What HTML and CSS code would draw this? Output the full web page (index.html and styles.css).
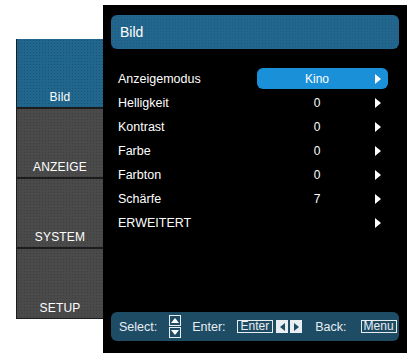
FILE: index.html
```html
<!DOCTYPE html>
<html lang="de">
<head>
    <meta charset="UTF-8">
    <meta name="viewport" content="width=device-width, initial-scale=1.0">
    <title>Bild</title>
    <link rel="stylesheet" href="styles.css">
</head>
<body>

    <div class="osd">
        <div class="tabs">
            <div class="tab active">Bild</div>
            <div class="tab">ANZEIGE</div>
            <div class="tab">SYSTEM</div>
            <div class="tab">SETUP</div>
        </div>

        <div class="panel">
            <div class="title">Bild</div>

            <ul class="rows">
                <li class="row selected"><span class="label">Anzeigemodus</span><span class="value">Kino</span><span class="arrow"></span></li>
                <li class="row"><span class="label">Helligkeit</span><span class="value">0</span><span class="arrow"></span></li>
                <li class="row"><span class="label">Kontrast</span><span class="value">0</span><span class="arrow"></span></li>
                <li class="row"><span class="label">Farbe</span><span class="value">0</span><span class="arrow"></span></li>
                <li class="row"><span class="label">Farbton</span><span class="value">0</span><span class="arrow"></span></li>
                <li class="row"><span class="label">Schärfe</span><span class="value">7</span><span class="arrow"></span></li>
                <li class="row"><span class="label">ERWEITERT</span><span class="value"></span><span class="arrow"></span></li>
            </ul>

            <div class="help">
                <span>Select:</span>
                <span class="updown">
                    <span class="key small"><span class="tri up"></span></span>
                    <span class="key small"><span class="tri down"></span></span>
                </span>
                <span class="gap">Enter:</span>
                <span class="key">Enter</span>
                <span class="key arrowkey"><span class="tri left"></span></span>
                <span class="key arrowkey"><span class="tri right"></span></span>
                <span class="gap back">Back:</span>
                <span class="key menu">Menu</span>
            </div>
        </div>
    </div>

</body>
</html>
```

FILE: styles.css
```css
body {
    margin: 0;
    background: #fff;
    font-family: "Liberation Sans", Arial, sans-serif;
    color: #fff;
}
.osd {
    display: flex;
    align-items: flex-start;
    padding: 5px 0 0 16px;
}
.tabs {
    width: 87px;
    margin-top: 34px;
    display: flex;
    flex-direction: column;
    background: #1c1c1c;
    border-left: 1px solid #1c1c1c;
    border-bottom: 1px solid #1c1c1c;
    box-sizing: border-box;
}
.tab {
    height: 68px;
    display: flex;
    align-items: flex-end;
    justify-content: center;
    padding-bottom: 3px;
    box-sizing: border-box;
    font-size: 12px;
    letter-spacing: 0.2px;
    background-color: #4a4a4a;
    background-image: radial-gradient(rgba(0,0,0,0.18) 0.6px, transparent 0.7px);
    background-size: 3px 3px;
    margin-bottom: 2px;
}
.tab:last-child {
    margin-bottom: 0;
    height: 69px;
}
.tab.active {
    background-color: #21668d;
}
.panel {
    width: 304px;
    height: 348px;
    box-sizing: border-box;
    background: #000;
    padding: 10px 8px 12px 8px;
    display: flex;
    flex-direction: column;
}
.title {
    height: 34px;
    background-color: #22668e;
    background-image: radial-gradient(rgba(0,0,0,0.12) 0.6px, transparent 0.7px);
    background-size: 3px 3px;
    border-radius: 6px;
    font-size: 14px;
    line-height: 34px;
    padding-left: 9px;
}
.rows {
    list-style: none;
    margin: 18px 0 0 0;
    padding: 0;
}
.row {
    height: 24px;
    display: flex;
    align-items: center;
    font-size: 12.5px;
    padding-left: 7px;
    position: relative;
}
.label {
    flex: 1;
}
.value {
    width: 120px;
    text-align: center;
    padding-left: 4px;
    box-sizing: border-box;
    font-size: 12px;
}
.arrow {
    width: 0;
    height: 0;
    border-top: 5px solid transparent;
    border-bottom: 5px solid transparent;
    border-left: 6px solid #fff;
    margin-right: 18px;
}
.row.selected::before {
    content: "";
    position: absolute;
    top: 1px;
    bottom: 2px;
    right: 11px;
    width: 131px;
    background: #1a90d9;
    border-radius: 6px;
    z-index: 0;
}
.row.selected span {
    position: relative;
    z-index: 1;
}
.help {
    margin-top: auto;
    height: 29px;
    background-color: #1f4c65;
    border-radius: 6px;
    display: flex;
    align-items: center;
    font-size: 12.5px;
    padding-left: 8px;
    color: #e8eef2;
}
.gap {
    margin-left: 11px;
}
.gap.back {
    margin-left: 13px;
}
.updown {
    display: flex;
    flex-direction: column;
    gap: 1px;
    margin-left: 12px;
}
.key {
    border: 1px solid #e8eef2;
    font-size: 12px;
    line-height: 11px;
    padding: 0 3px;
    margin-left: 4px;
    display: flex;
    align-items: center;
    justify-content: center;
}
.gap + .key {
    margin-left: 11px;
}
.key.small {
    width: 12px;
    height: 11px;
    padding: 0;
    margin-left: 0;
    box-sizing: border-box;
}
.key.arrowkey {
    width: 12px;
    height: 13px;
    padding: 0;
    box-sizing: border-box;
    margin-left: 3px;
    background: #e8eef2;
}
.key.arrowkey + .key.arrowkey {
    margin-left: 2px;
}
.gap + .key.menu {
    margin-left: 14px;
    padding: 0 2px;
}
.tri {
    width: 0;
    height: 0;
}
.tri.up {
    border-left: 4px solid transparent;
    border-right: 4px solid transparent;
    border-bottom: 5px solid #fff;
}
.tri.down {
    border-left: 4px solid transparent;
    border-right: 4px solid transparent;
    border-top: 5px solid #fff;
}
.tri.left {
    border-top: 4px solid transparent;
    border-bottom: 4px solid transparent;
    border-right: 5px solid #1f4c65;
}
.tri.right {
    border-top: 4px solid transparent;
    border-bottom: 4px solid transparent;
    border-left: 5px solid #1f4c65;
}
```
